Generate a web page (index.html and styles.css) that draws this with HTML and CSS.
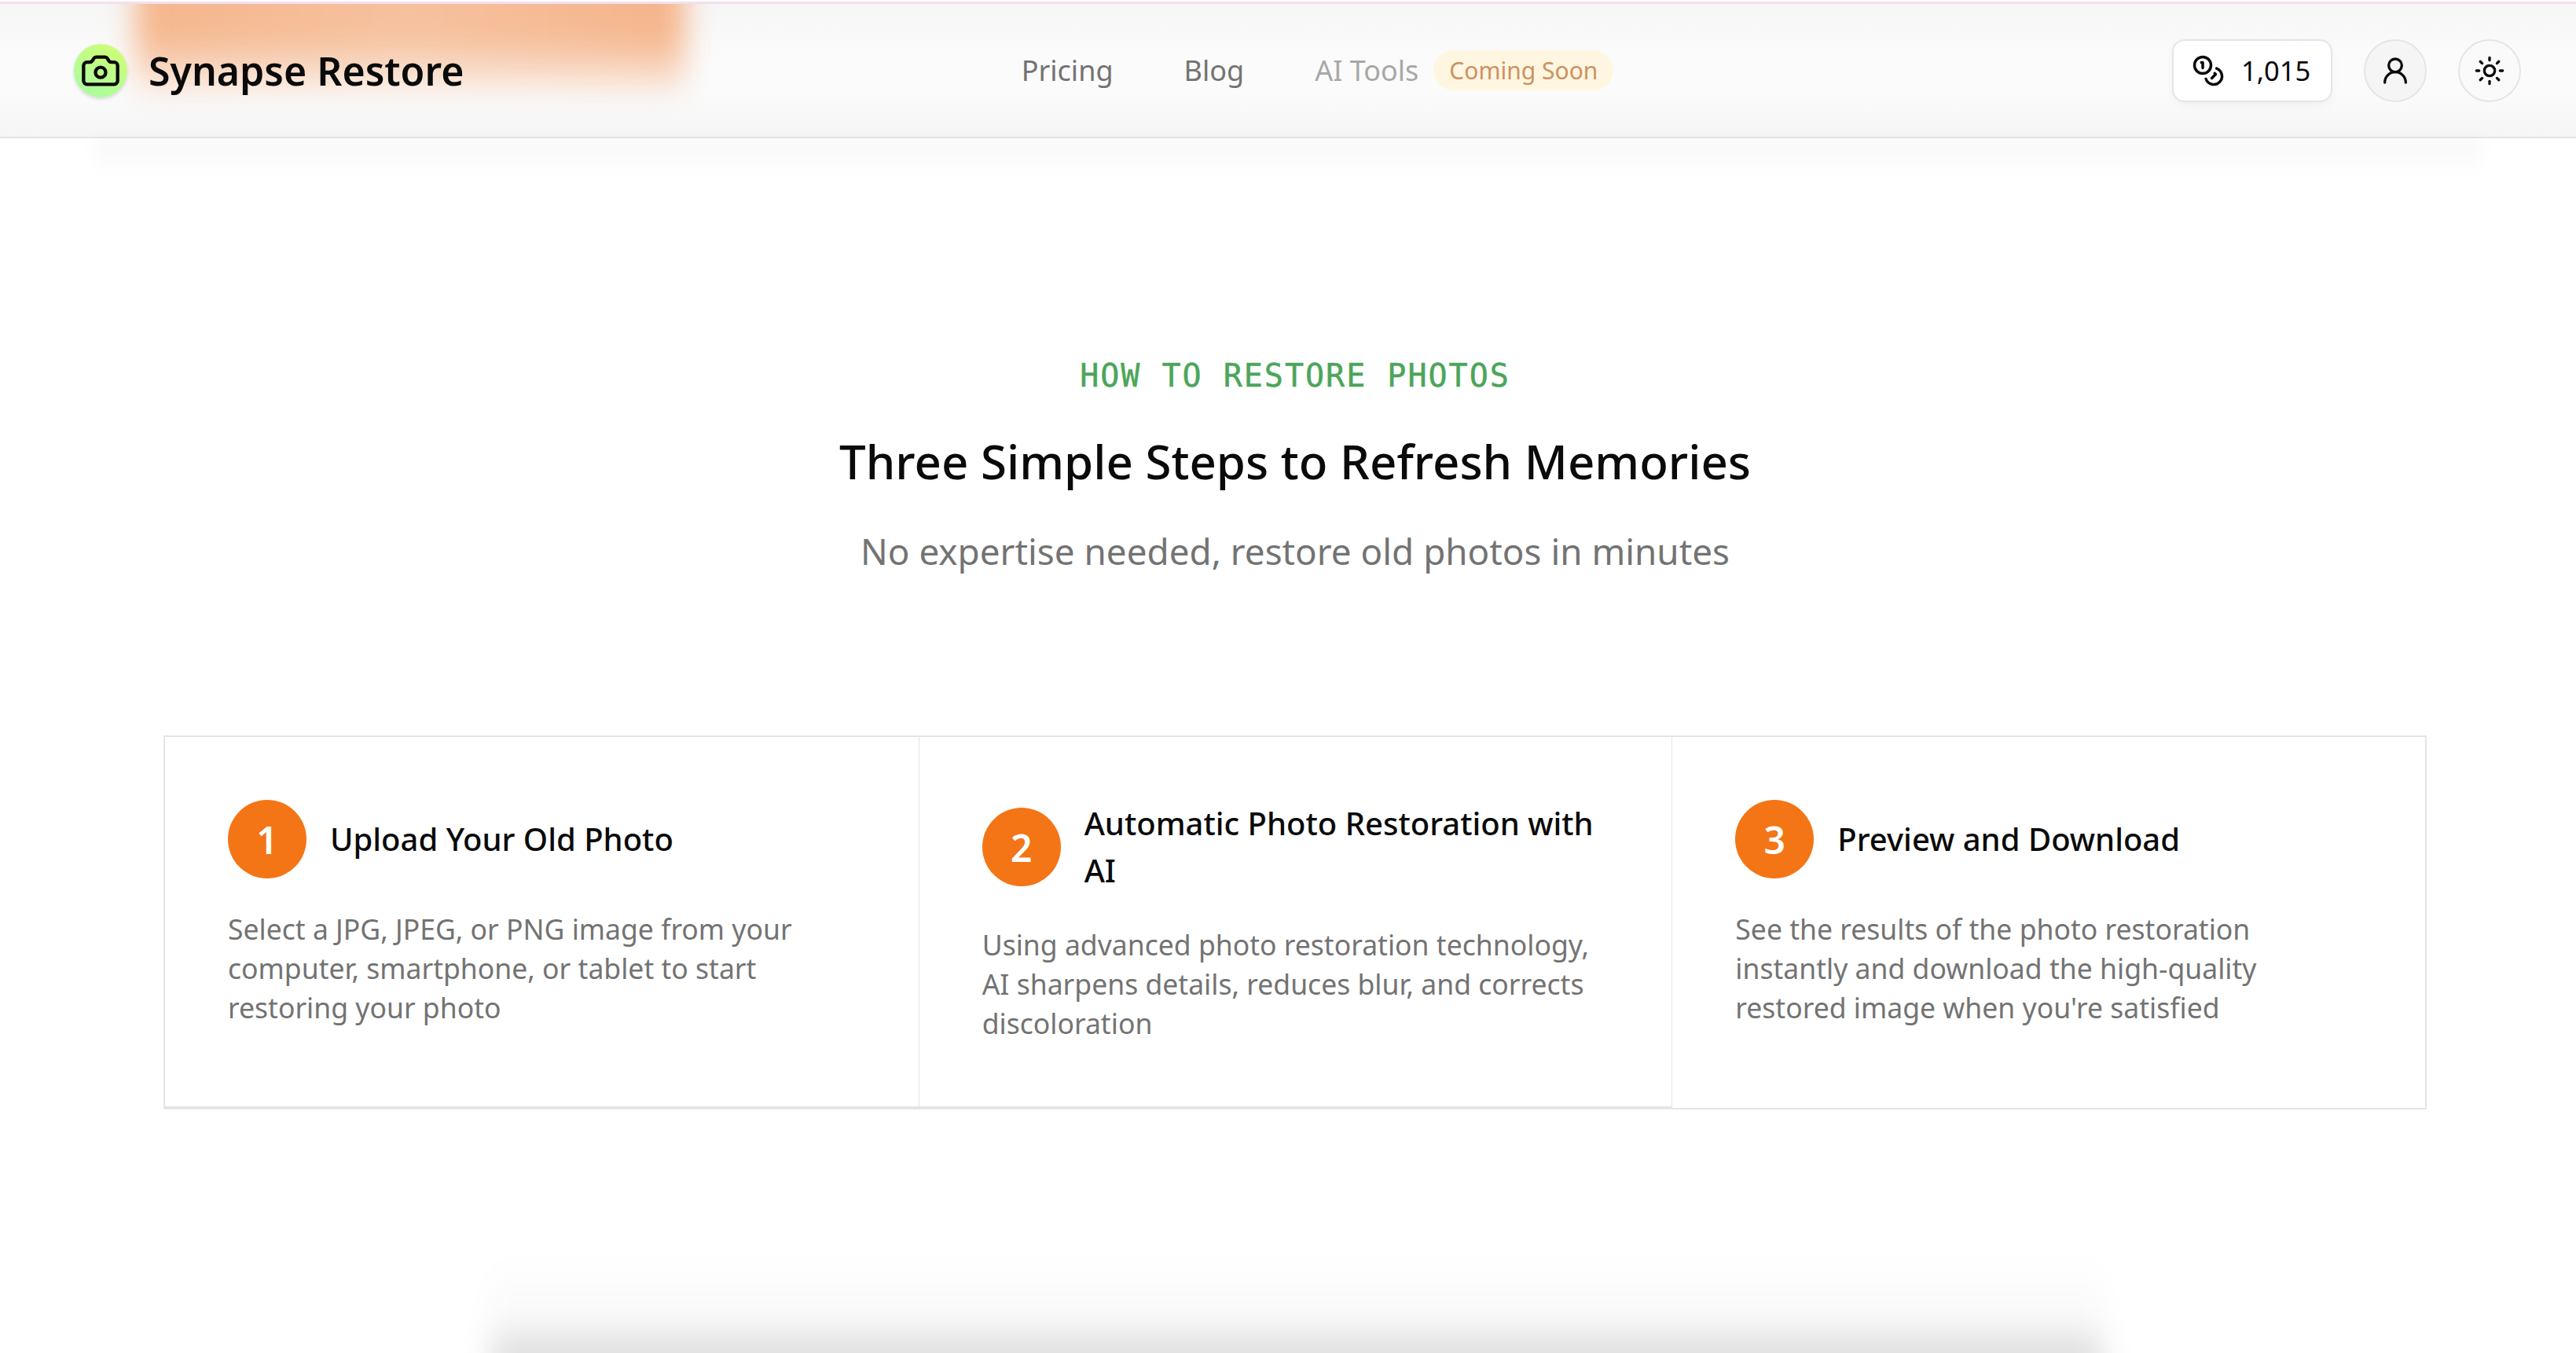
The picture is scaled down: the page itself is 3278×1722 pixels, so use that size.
FILE: index.html
```html
<!DOCTYPE html>
<html lang="en">
<head>
<meta charset="utf-8">
<title>Synapse Restore</title>
<link rel="stylesheet" href="styles.css">
</head>
<body>
<div class="page">
  <header class="site-header">
    <div class="header-glow"></div>
    <div class="brand">
      <span class="brand-mark">
        <svg viewBox="0 0 24 24" width="52" height="52" fill="none" stroke="#0a0a0a" stroke-width="2" stroke-linecap="round" stroke-linejoin="round"><path d="M4 7h1.5a2 2 0 0 0 1.7-.9l.9-1.4A1.500 1.500 0 0 1 9.400 4h5.200a1.500 1.500 0 0 1 1.300.7l.9 1.400a2 2 0 0 0 1.700.9H20a2 2 0 0 1 2 2v9a2 2 0 0 1-2 2H4a2 2 0 0 1-2-2V9a2 2 0 0 1 2-2z"/><circle cx="12" cy="13" r="3"/></svg>
      </span>
      <span class="brand-name">Synapse Restore</span>
    </div>
    <nav class="main-nav">
      <a class="nav-link">Pricing</a>
      <a class="nav-link">Blog</a>
      <span class="nav-tools">
        <a class="nav-link nav-link-muted">AI Tools</a>
        <span class="soon-badge">Coming Soon</span>
      </span>
    </nav>
    <div class="header-actions">
      <div class="credits">
        <svg viewBox="0 0 24 24" width="42" height="42" fill="none" stroke="#0a0a0a" stroke-width="2" stroke-linecap="round" stroke-linejoin="round"><circle cx="8" cy="8" r="6"/><path d="M18.090 10.370A6 6 0 1 1 10.340 18"/><path d="M7 6h1v4"/><path d="m16.710 13.880.7.710-2.820 2.820"/></svg>
        <span>1,015</span>
      </div>
      <button class="icon-btn icon-btn-user" aria-label="Account">
        <svg viewBox="0 0 24 24" width="40" height="40" fill="none" stroke="#0a0a0a" stroke-width="2" stroke-linecap="round" stroke-linejoin="round"><circle cx="12" cy="8" r="5"/><path d="M20 21a8 8 0 0 0-16 0"/></svg>
      </button>
      <button class="icon-btn" aria-label="Theme">
        <svg viewBox="0 0 24 24" width="40" height="40" fill="none" stroke="#0a0a0a" stroke-width="2" stroke-linecap="round" stroke-linejoin="round"><circle cx="12" cy="12" r="4"/><path d="M12 2v2M12 20v2M4.930 4.930l1.410 1.410M17.660 17.660l1.410 1.410M2 12h2M20 12h2M6.340 17.660l-1.410 1.410M19.070 4.930l-1.410 1.410"/></svg>
      </button>
    </div>
  </header>
  <div class="header-shadow"></div>

  <main class="how-section">
    <div class="section-head">
      <p class="eyebrow">HOW TO RESTORE PHOTOS</p>
      <h2 class="section-title">Three Simple Steps to Refresh Memories</h2>
      <p class="section-sub">No expertise needed, restore old photos in minutes</p>
    </div>
    <div class="steps">
      <article class="step">
        <div class="step-head">
          <span class="step-num">1</span>
          <h3 class="step-title">Upload Your Old Photo</h3>
        </div>
        <p class="step-text">Select a JPG, JPEG, or PNG image from your computer, smartphone, or tablet to start restoring your photo</p>
      </article>
      <article class="step">
        <div class="step-head">
          <span class="step-num">2</span>
          <h3 class="step-title">Automatic Photo Restoration with AI</h3>
        </div>
        <p class="step-text">Using advanced photo restoration technology, AI sharpens details, reduces blur, and corrects discoloration</p>
      </article>
      <article class="step">
        <div class="step-head">
          <span class="step-num">3</span>
          <h3 class="step-title">Preview and Download</h3>
        </div>
        <p class="step-text">See the results of the photo restoration instantly and download the high-quality restored image when you're satisfied</p>
      </article>
    </div>
  </main>
  <div class="next-shadow"></div>
</div>
</body>
</html>
```
FILE: styles.css
```css
* { box-sizing: border-box; }
html, body { margin: 0; padding: 0; background: #fff; }
body { font-family: "Noto Sans", "Open Sans", sans-serif; color: #0a0a0a; }
.page { position: relative; width: 3278px; height: 1722px; overflow: hidden; background: #fff; padding-top: 2px; }

.site-header {
  position: relative;
  height: 174px;
  display: grid;
  grid-template-columns: 1fr auto 1fr;
  align-items: center;
  padding: 0 70px 0 94px;
  overflow: hidden;
  border-top: 3px solid #f3dfec;
  border-bottom: 2px solid #e5e5e5;
  background: linear-gradient(180deg, #f6f6f6 0%, #fbfbfb 40%, #fbfbfb 65%, #f6f6f6 100%);
}
.header-glow {
  position: absolute;
  left: 172px;
  top: -50px;
  width: 700px;
  height: 164px;
  border-radius: 16px;
  background:
    linear-gradient(180deg, rgba(251, 251, 251, 0) 55%, rgba(251, 251, 251, 0.8) 100%),
    linear-gradient(90deg, #f5b68c, #f6c19e 50%, #f5b48a);
  filter: blur(18px);
}
.header-shadow {
  position: absolute;
  left: 120px;
  right: 120px;
  top: 176px;
  height: 46px;
  background: linear-gradient(180deg, rgba(0, 0, 0, 0.03), rgba(0, 0, 0, 0));
  filter: blur(8px);
}
.brand { position: relative; display: flex; align-items: center; gap: 27px; }
.brand-mark {
  width: 68px; height: 68px; border-radius: 50%;
  display: flex; align-items: center; justify-content: center;
  background: linear-gradient(30deg, #a6fba6, #d3ff70);
  box-shadow: 0 2px 4px rgba(0, 0, 0, 0.15);
}
.brand-name { font-size: 50px; font-weight: 600; line-height: 68px; color: #0a0a0a; }

.main-nav { display: flex; align-items: center; gap: 90px; margin-left: 51px; }
.nav-link { font-size: 36px; line-height: 50px; color: #737373; }
.nav-link-muted { color: #a8a8a8; }
.nav-tools { display: flex; align-items: center; gap: 19px; }
.soon-badge {
  height: 51px; padding: 0 20px;
  display: flex; align-items: center;
  border-radius: 26px;
  background: #fef6e0;
  color: #cd9160;
  font-size: 30px;
}

.header-actions { display: flex; align-items: center; justify-content: flex-end; gap: 40px; }
.credits {
  width: 204px; height: 80px;
  display: flex; align-items: center; gap: 21px;
  padding-left: 23px;
  background: #fff;
  border: 2px solid #e5e5e5;
  border-radius: 16px;
  box-shadow: 0 4px 12px rgba(0, 0, 0, 0.04);
  font-size: 34.500px;
  color: #0a0a0a;
}
.icon-btn {
  width: 80px; height: 80px; padding: 0;
  display: flex; align-items: center; justify-content: center;
  background: #fafafa;
  border: 2px solid #e5e5e5;
  border-radius: 50%;
}
.icon-btn-user { background: #f5f5f5; }

.how-section { padding: 274px 190px 0 208px; }
.section-head { text-align: center; }
.eyebrow {
  margin: 0;
  font-family: "DejaVu Sans Mono", "Liberation Mono", monospace;
  font-size: 40px;
  letter-spacing: 2px;
  line-height: 56px;
  color: #4ca55a;
  -webkit-text-stroke: 0.5px #4ca55a;
}
.section-title { margin: 41px 0 0; font-size: 60px; font-weight: 500; line-height: 80px; color: #0a0a0a; }
.section-sub { margin: 38px 0 0; font-size: 45.800px; line-height: 72px; color: #737373; }

.steps {
  margin-top: 199px;
  width: 2880px;
  display: grid;
  grid-template-columns: repeat(3, 1fr);
  border: 2px solid #e5e5e5;
}
.step {
  padding: 80px;
  border-left: 1px solid #e5e5e5;
  display: flex; flex-direction: column; gap: 39px;
  min-height: 472px;
}
.step:first-child { border-left: 0; }
.step:not(:last-child) { border-bottom: 2px solid #e5e5e5; }
.step-head { display: flex; align-items: center; gap: 30px; }
.step-num {
  flex: none;
  width: 100px; height: 100px; border-radius: 50%;
  display: flex; align-items: center; justify-content: center;
  background: #f47515;
  color: #fff;
  font-size: 48px;
  font-weight: 600;
}
.step-title { margin: 0; font-size: 40px; font-weight: 500; line-height: 60px; color: #0a0a0a; }
.step-text { margin: 0; font-size: 35.550px; line-height: 50px; color: #737373; }

.next-shadow {
  position: absolute;
  left: 625px; top: 1600px;
  width: 2050px; height: 160px;
  background: linear-gradient(180deg, rgba(0, 0, 0, 0) 0%, rgba(0, 0, 0, 0.025) 50%, rgba(0, 0, 0, 0.13) 76%);
  filter: blur(18px);
}
```
